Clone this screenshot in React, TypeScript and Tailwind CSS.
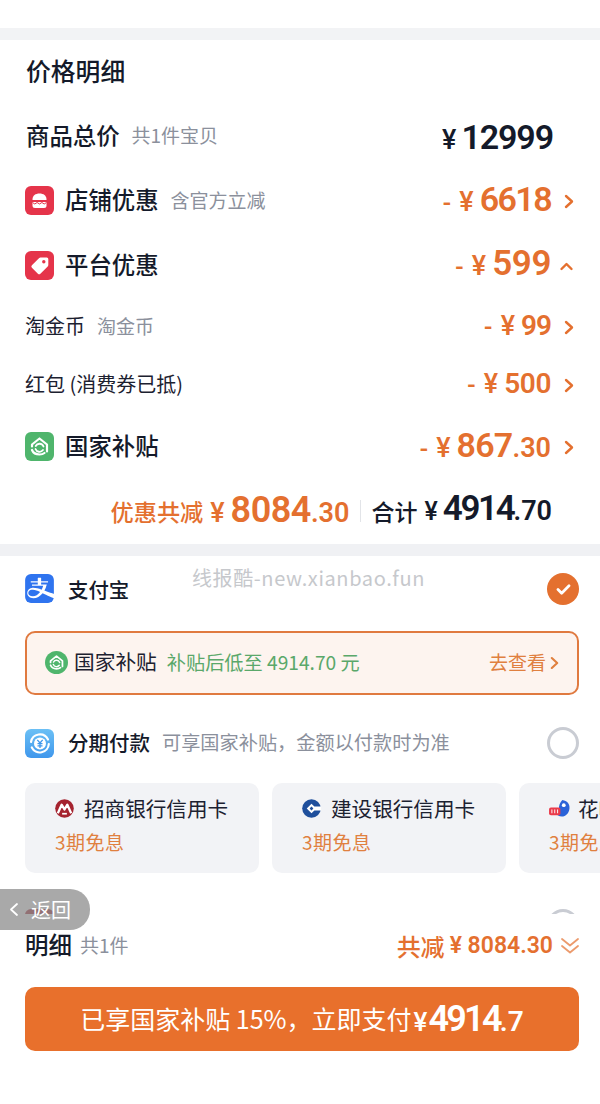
import React from 'react';
import { SiAlipay } from 'react-icons/si';

const SANS = 'font-["Noto_Sans_CJK_SC","Noto_Sans",sans-serif]';
const NUM = 'font-["Roboto","Noto_Sans_CJK_SC",sans-serif]';

const Chevron = ({ className = 'w-[10px] h-[15px]', up = false }: { className?: string; up?: boolean }) => (
  <svg viewBox="0 0 10 15" className={className} fill="none" stroke="currentColor" strokeWidth="2.400" strokeLinecap="round" strokeLinejoin="round">
    {up ? <polyline points="0,10 5,5 10,10" /> : <polyline points="2,2 8,7.5 2,13" />}
  </svg>
);

const StoreIcon = () => (
  <svg viewBox="0 0 29 29" className="w-[29px] h-[29px] shrink-0">
    <rect width="29" height="29" rx="6" fill="#e5344a" />
    <path d="M7.5 13.5c0-4 3-6 7-6s7 2 7 6v.5h-14z" fill="#fff" />
    <path d="M7.5 16h14v3.5a2.500 2.500 0 0 1-2.500 2.500h-9a2.500 2.500 0 0 1-2.500-2.500z" fill="#fff" />
    <path d="M7.500 16.500l2.300 1.500 2.300-1.500 2.400 1.500 2.400-1.500 2.300 1.500 2.300-1.500" fill="none" stroke="#e5344a" strokeWidth="1" />
  </svg>
);

const TagIcon = () => (
  <svg viewBox="0 0 29 29" className="w-[29px] h-[29px] shrink-0">
    <rect width="29" height="29" rx="6" fill="#e5344a" />
    <path d="M15.800 6.500h6a1.500 1.500 0 0 1 1.500 1.500v6a2 2 0 0 1-.6 1.400l-7.300 7.300a1.800 1.800 0 0 1-2.500 0l-6-6a1.800 1.800 0 0 1 0-2.500l7.300-7.300a2 2 0 0 1 1.600-.4z" fill="#fff" />
    <circle cx="18.800" cy="10.800" r="1.700" fill="#e5344a" />
  </svg>
);

const SubsidyMark = ({ bg, rounded }: { bg: string; rounded: number }) => (
  <>
    <rect width="29" height="29" rx={rounded} fill={bg} />
    <path d="M7 14.500v-2l7.500-6 7.500 6v7" fill="none" stroke="#fff" strokeWidth="2.200" strokeLinecap="round" strokeLinejoin="round" />
    <path d="M7 18c1.200 3 4 4.500 7.500 4.500 2 0 3.800-.5 5-1.500" fill="none" stroke="#fff" strokeWidth="2.200" strokeLinecap="round" />
    <path d="M18.500 14.500a4.300 4.300 0 0 0-7.800-.5M10.500 17a4.300 4.300 0 0 0 7.500 1" fill="none" stroke="#fff" strokeWidth="1.800" strokeLinecap="round" />
  </>
);

const InstallmentIcon = () => (
  <svg viewBox="0 0 29 29" className="w-[29px] h-[29px] shrink-0">
    <defs>
      <linearGradient id="inst" x1="0" y1="0" x2="0" y2="1">
        <stop offset="0" stopColor="#6cc0f5" />
        <stop offset="1" stopColor="#3f97ec" />
      </linearGradient>
    </defs>
    <rect width="29" height="29" rx="6" fill="url(#inst)" />
    <path d="M6 13a9 9 0 0 1 17-2.500M23.800 15a9 9 0 0 1-17 3.500" fill="none" stroke="#fff" strokeWidth="2.200" strokeLinecap="round" />
    <circle cx="15" cy="14.500" r="6" fill="#fff" />
    <path d="M12.300 10.800l2.700 3.200 2.700-3.200M15 14v5M12.500 14.600h5M12.500 16.800h5" fill="none" stroke="#3f97ec" strokeWidth="1.300" />
  </svg>
);

const CmbLogo = () => (
  <svg viewBox="0 0 20 20" className="w-[19px] h-[19px] shrink-0">
    <circle cx="10" cy="10" r="9.800" fill="#a5232f" />
    <path d="M3 15L7 6l3 5 3-5 4 9" fill="none" stroke="#fff" strokeWidth="2.400" strokeLinejoin="round" />
    <path d="M7.500 15.500h5" stroke="#fff" strokeWidth="1.800" />
  </svg>
);

const CcbLogo = () => (
  <svg viewBox="0 0 20 20" className="w-[19px] h-[19px] shrink-0">
    <circle cx="10" cy="10" r="9.800" fill="#1f4f9c" />
    <path d="M5 10l5-5 3 3h7v4h-7l-3 3z" fill="#fff" />
    <path d="M8 10l2-2 2 2-2 2z" fill="#1f4f9c" />
  </svg>
);

const HuabeiLogo = () => (
  <svg viewBox="0 0 22 20" className="w-[21px] h-[19px] shrink-0">
    <path d="M14 1c5 1 8 4 7.500 9-.5 5-4 8.500-8 8.500-3 0-5.500-1.500-6.500-4 3 .5 4-2 3.500-4-.5-3 1-7 3.500-9.500z" fill="#2a62d8" />
    <circle cx="15.500" cy="6.500" r="2" fill="#fff" />
    <rect x="0" y="9" width="12" height="8" rx="2" fill="#ea3a4a" />
    <path d="M3 11v4M6 11v4M9 11v4" stroke="#fff" strokeWidth="1" />
  </svg>
);

type AmountProps = {
  int: string;
  dec?: string;
  size: string;
  decSize?: string;
  dash?: boolean;
};

const Amount = ({ int, dec, size, decSize, dash }: AmountProps) => (
  <div className={`flex items-baseline mb-[3px] ${NUM} text-[#e4702f] font-semibold`}>
    {dash && <span className="text-[24px] mr-[8px]">-</span>}
    <span className="text-[27px] font-medium mr-[6px]">¥</span>
    <span className={size}>{int}</span>
    {dec && <span className={decSize}>{dec}</span>}
  </div>
);

const PriceRow = ({ h, icon, title, note, titleClass, children, chevron }: {
  h: string;
  icon?: React.ReactNode;
  title: string;
  note?: string;
  titleClass: string;
  children: React.ReactNode;
  chevron: React.ReactNode;
}) => (
  <div className={`flex items-center justify-between pl-[25px] pr-[26px] ${h}`}>
    <div className="flex items-center">
      {icon && <div className="mr-[11px] flex">{icon}</div>}
      <span className={`${titleClass} mb-[2px]`}>{title}</span>
      {note && <span className="ml-[12px] mb-[2px] text-[19px] text-[#8b909c]">{note}</span>}
    </div>
    <div className="flex items-center">
      {children}
      <div className="w-[23px] flex justify-end text-[#e4702f]">{chevron}</div>
    </div>
  </div>
);

const BankCard = ({ logo, name }: { logo: React.ReactNode; name: string }) => (
  <div className="w-[234px] h-[90px] shrink-0 rounded-[10px] bg-[#f2f3f6] pl-[30px] pt-[11px]">
    <div className="flex items-center">
      <div className="flex w-[29px]">{logo}</div>
      <span className="text-[20.6px] leading-[29px] text-[#1c2130] whitespace-nowrap">{name}</span>
    </div>
    <div className="mt-[5px] text-[19px] leading-[28px] text-[#e0803f] tracking-[0.5px] whitespace-nowrap">3期免息</div>
  </div>
);

export default function App() {
  const big = 'text-[23.4px] font-medium text-[#141a2a]';
  const small = 'text-[20px] text-[#1c2130]';
  return (
    <div className={`${SANS} relative w-[600px] h-[1104px] overflow-hidden bg-white`}>
      <div className="h-[914px] overflow-hidden">
        <div className="h-[28px]" />
        <div className="h-[12px] bg-[#f2f3f5]" />

        {/* 价格明细 */}
        <div className="h-[66px] pb-[4px] flex items-center pl-[26px] text-[24.8px] font-medium text-[#141a2a]">价格明细</div>

        <div className="flex items-center justify-between h-[62px] pl-[26px] pr-[47px]">
          <div className="flex items-center">
            <span className={`${big} mb-[3px]`}>商品总价</span>
            <span className="ml-[12px] mb-[3px] text-[19px] text-[#8b909c]">共1件宝贝</span>
          </div>
          <div className={`flex items-baseline ${NUM} text-[#141a2a] font-semibold`}>
            <span className="text-[27px] font-medium mr-[5px]">¥</span>
            <span className="text-[34px] tracking-[-1.100px]">12999</span>
          </div>
        </div>

        <PriceRow h="h-[66px]" icon={<StoreIcon />} title="店铺优惠" note="含官方立减" titleClass={big} chevron={<Chevron />}>
          <Amount dash int="6618" size="text-[34px] tracking-[-1.600px]" />
        </PriceRow>
        <PriceRow h="h-[64px]" icon={<TagIcon />} title="平台优惠" titleClass={big} chevron={<Chevron up className="w-[15px] h-[15px]" />}>
          <Amount dash int="599" size="text-[35px] tracking-[-0.400px]" />
        </PriceRow>
        <PriceRow h="h-[58px]" title="淘金币" note="淘金币" titleClass={small} chevron={<Chevron />}>
          <Amount dash int="99" size="text-[28px] tracking-[-1px]" />
        </PriceRow>
        <PriceRow h="h-[58px]" title="红包 (消费券已抵)" titleClass={small} chevron={<Chevron />}>
          <Amount dash int="500" size="text-[28px] tracking-[-0.400px]" />
        </PriceRow>
        <PriceRow
          h="h-[66px]"
          icon={<svg viewBox="0 0 29 29" className="w-[29px] h-[29px] shrink-0"><SubsidyMark bg="#4fb56c" rounded={6} /></svg>}
          title="国家补贴"
          titleClass={big}
          chevron={<Chevron />}
        >
          <Amount dash int="867" dec=".30" size="text-[34px] tracking-[-0.800px]" decSize="text-[27px]" />
        </PriceRow>

        <div className="h-[64px] pb-[2px] flex items-center justify-end pr-[48px]">
          <span className="text-[23.2px] font-medium text-[#e4702f] mr-[7px]">优惠共减</span>
          <Amount int="8084" dec=".30" size="text-[36px] tracking-[-0.500px]" decSize="text-[27px]" />
          <div className="w-px h-[22px] bg-[#e2e4e8] ml-[11px] mr-[10px]" />
          <span className="text-[23px] text-[#141a2a] font-medium mr-[7px]">合计</span>
          <div className={`flex items-baseline mb-[3px] ${NUM} text-[#141a2a] font-semibold`}>
            <span className="text-[25px] font-medium mr-[5px]">¥</span>
            <span className="text-[35px] tracking-[-2.300px]">4914</span>
            <span className="text-[27px]">.70</span>
          </div>
        </div>

        <div className="h-[12px] bg-[#f0f1f4]" />

        {/* 支付方式 */}
        <div className="h-[66px] flex items-center justify-between pl-[25px] pr-[21px]">
          <div className="flex items-center">
            <div className="mr-[14px] flex rounded-[6px] overflow-hidden"><SiAlipay size={29} color="#2f74ef" /></div>
            <span className="text-[20.400px] font-medium text-[#141a2a]">支付宝</span>
          </div>
          <div className="w-[32px] h-[32px] rounded-full bg-[#e4702f] flex items-center justify-center">
            <svg viewBox="0 0 16 12" className="w-[15px] h-[11px]" fill="none" stroke="#fff" strokeWidth="3" strokeLinecap="round" strokeLinejoin="round">
              <polyline points="2,6 6,10 14,2" />
            </svg>
          </div>
        </div>

        <div className="mt-[9px] mx-[25px] w-[554px] h-[64px] rounded-[10px] border-2 border-[#e07a40] bg-[#fdf4ef] flex items-center justify-between pl-[18px] pr-[18px]">
          <div className="flex items-center">
            <svg viewBox="0 0 29 29" className="w-[23px] h-[23px] shrink-0 mr-[6px]"><SubsidyMark bg="#4fb56c" rounded={14.5} /></svg>
            <span className="text-[20.700px] text-[#1c2130] mr-[10px] mb-[2px]">国家补贴</span>
            <span className="text-[19.200px] text-[#5aa86a] mb-[2px]">补贴后低至 4914.70 元</span>
          </div>
          <div className="flex items-center text-[#e0803f]">
            <span className="text-[19px] mr-[4px] mb-[2px]">去查看</span>
            <Chevron className="w-[9px] h-[14px]" />
          </div>
        </div>

        <div className="mt-[17px] h-[62px] flex items-center justify-between pl-[25px] pr-[21px]">
          <div className="flex items-center">
            <div className="mr-[14px] flex"><InstallmentIcon /></div>
            <span className="text-[20.500px] font-medium text-[#141a2a] mb-[2px]">分期付款</span>
            <span className="ml-[12px] mb-[2px] text-[19.200px] text-[#8b909c]">可享国家补贴，金额以付款时为准</span>
          </div>
          <div className="w-[32px] h-[32px] rounded-full border-[3px] border-[#c9ccd3]" />
        </div>

        <div className="mt-[9px] pl-[25px] flex gap-[13px] overflow-hidden">
          <BankCard logo={<CmbLogo />} name="招商银行信用卡" />
          <BankCard logo={<CcbLogo />} name="建设银行信用卡" />
          <BankCard logo={<HuabeiLogo />} name="花呗" />
        </div>

        {/* next row, cut off by the footer */}
        <div className="mt-[36px] flex items-start justify-between pl-[25px] pr-[21px]">
          <div className="w-[29px] h-[29px] rounded-[6px] bg-[#a5232f]" />
          <div className="w-[32px] h-[32px] rounded-full border-[3px] border-[#c9ccd3]" />
        </div>
      </div>

      {/* footer */}
      <div className="h-[190px] bg-white">
        <div className="h-[64px] flex items-center justify-between pl-[25px] pr-[21px]">
          <div className="flex items-center">
            <span className="text-[23.500px] font-medium text-[#141a2a] mb-[2px]">明细</span>
            <span className="ml-[8px] text-[19px] text-[#8b909c] mb-[2px]">共1件</span>
          </div>
          <div className="flex items-center text-[#e4702f]">
            <span className="text-[24px] font-medium mr-[5px]">共减</span>
            <span className={`${NUM} text-[23px] font-semibold mt-[1px]`}>¥ 8084.30</span>
            <svg viewBox="0 0 18 18" className="w-[18px] h-[18px] ml-[8px]" fill="none" stroke="currentColor" strokeWidth="1.800" strokeLinecap="round" strokeLinejoin="round" opacity="0.700">
              <polyline points="1,2 9,8.500 17,2" />
              <polyline points="1,9 9,15.500 17,9" />
            </svg>
          </div>
        </div>
        <button className="mt-[9px] mx-[25px] w-[554px] h-[64px] rounded-[10px] bg-[#e8702c] flex items-center justify-center text-white">
          <span className="text-[25px] mr-[2px]">已享国家补贴 15%，立即支付</span>
          <span className={`${NUM} flex items-baseline font-semibold`}>
            <span className="text-[26px] font-medium mr-[1px]">¥</span>
            <span className="text-[36px] tracking-[-2.700px]">4914</span>
            <span className="text-[28px]">.7</span>
          </span>
        </button>
      </div>

      {/* watermark */}
      <div className="absolute left-[192px] top-[564px] text-[20px] leading-[28px] text-[#c6c8cc] tracking-[0.6px] whitespace-nowrap">线报酷-new.xianbao.fun</div>

      {/* floating back pill */}
      <div className="absolute left-0 top-[889px] w-[90px] h-[41px] rounded-r-[20px] bg-[#8c8c8c]/75 flex items-center pl-[9px] text-white">
        <svg viewBox="0 0 10 15" className="w-[10px] h-[15px] mr-[12px]" fill="none" stroke="currentColor" strokeWidth="1.800" strokeLinecap="round" strokeLinejoin="round">
          <polyline points="8,2 2,7.500 8,13" />
        </svg>
        <span className="text-[20px]">返回</span>
      </div>
    </div>
  );
}
